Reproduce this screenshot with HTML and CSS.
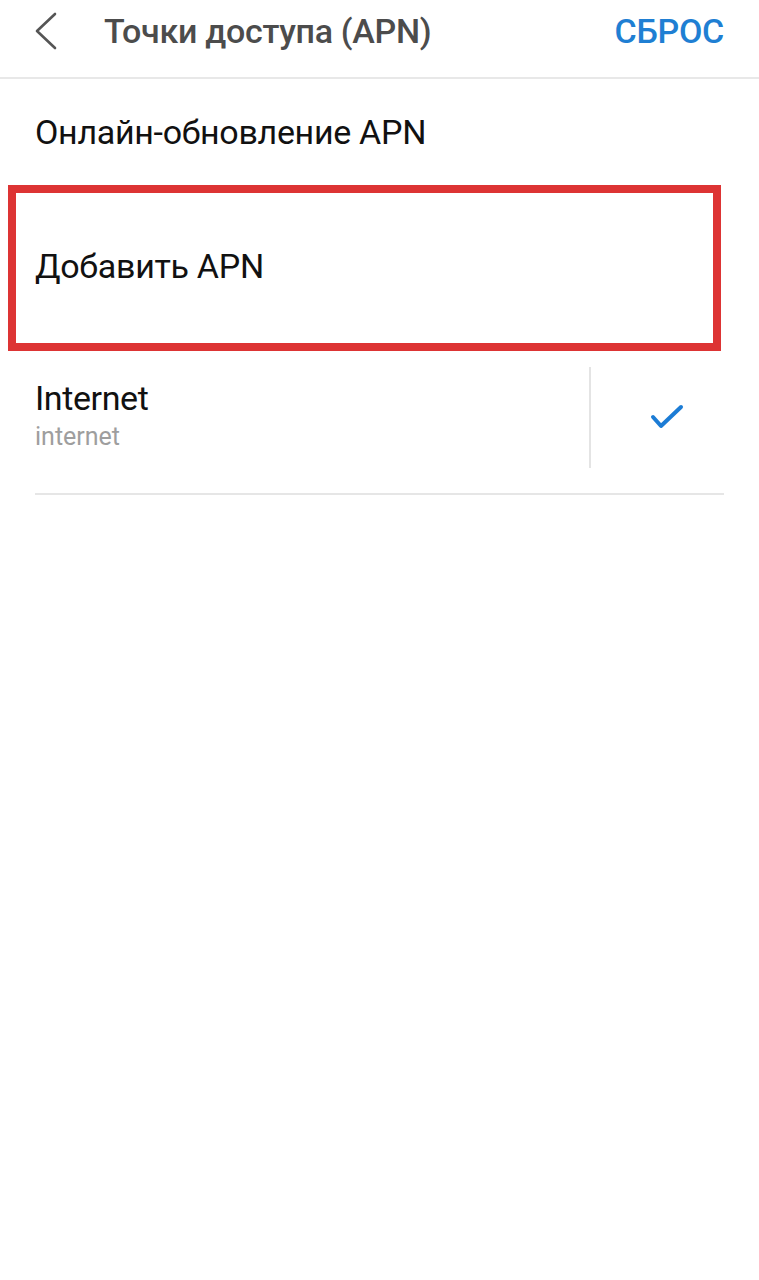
FILE: index.html
```html
<!DOCTYPE html>
<html lang="ru">
<head>
<meta charset="utf-8">
<title>Точки доступа (APN)</title>
<link rel="stylesheet" href="styles.css">
</head>
<body>
<header class="topbar">
  <button class="back" aria-label="Назад">
    <svg width="24" height="40" viewBox="0 0 24 40"><polyline points="21,3 3,20 21,37" fill="none" stroke="#555" stroke-width="2.6" stroke-linecap="round" stroke-linejoin="round"/></svg>
  </button>
  <h1 class="title">Точки доступа (APN)</h1>
  <span class="reset">СБРОС</span>
</header>
<main class="list">
  <div class="row">Онлайн-обновление APN</div>
  <div class="row row-marked">Добавить APN</div>
  <div class="apn">
    <div class="apn-text">
      <div class="apn-name">Internet</div>
      <div class="apn-sub">internet</div>
    </div>
    <div class="apn-check">
      <svg width="34" height="28" viewBox="0 0 34 28"><polyline points="3,13 11,22 31,3" fill="none" stroke="#1c7cd5" stroke-width="4" stroke-linecap="round" stroke-linejoin="round"/></svg>
    </div>
  </div>
</main>
</body>
</html>
```

FILE: styles.css
```css
* { box-sizing: border-box; }
html, body { margin: 0; padding: 0; background: #fff; }
body {
  font-family: Roboto, "Liberation Sans", sans-serif;
  width: 759px;
  min-height: 1280px;
}
.topbar {
  display: flex;
  align-items: center;
  height: 79px;
  border-bottom: 2px solid #e8e8e8;
  padding: 0 35px 16px 34px;
}
.back {
  border: 0;
  background: none;
  padding: 0;
  display: flex;
}
.title {
  margin: 0 0 0 46px;
  font-size: 34px;
  font-weight: 500;
  color: #4c4c4c;
  flex: 1;
  letter-spacing: -0.3px;
}
.reset {
  font-size: 34px;
  font-weight: 500;
  color: #1f7fd3;
  letter-spacing: -0.3px;
}
.list { display: flex; flex-direction: column; }
.row {
  height: 106px;
  display: flex;
  align-items: center;
  padding-left: 35px;
  font-size: 34px;
  color: #111;
  letter-spacing: -0.3px;
}
.row-marked {
  height: 166px;
  margin: 0 38px 0 8px;
  border: 8px solid #dd3434;
  padding-left: 19px;
  padding-bottom: 4px;
}
.apn {
  display: flex;
  margin: 0 35px;
  padding: 16px 0 25px;
  border-bottom: 2px solid #e6e6e6;
}
.apn-text {
  flex: 1;
  display: flex;
  flex-direction: column;
  justify-content: center;
  border-right: 2px solid #e4e4e4;
  height: 101px;
  padding-bottom: 2px;
}
.apn-name {
  font-size: 34px;
  color: #111;
  line-height: 40px;
  letter-spacing: -0.4px;
}
.apn-sub {
  font-size: 25px;
  color: #9e9e9e;
  line-height: 38px;
}
.apn-check {
  width: 133px;
  display: flex;
  align-items: center;
  justify-content: center;
  padding-left: 18px;
}
```
